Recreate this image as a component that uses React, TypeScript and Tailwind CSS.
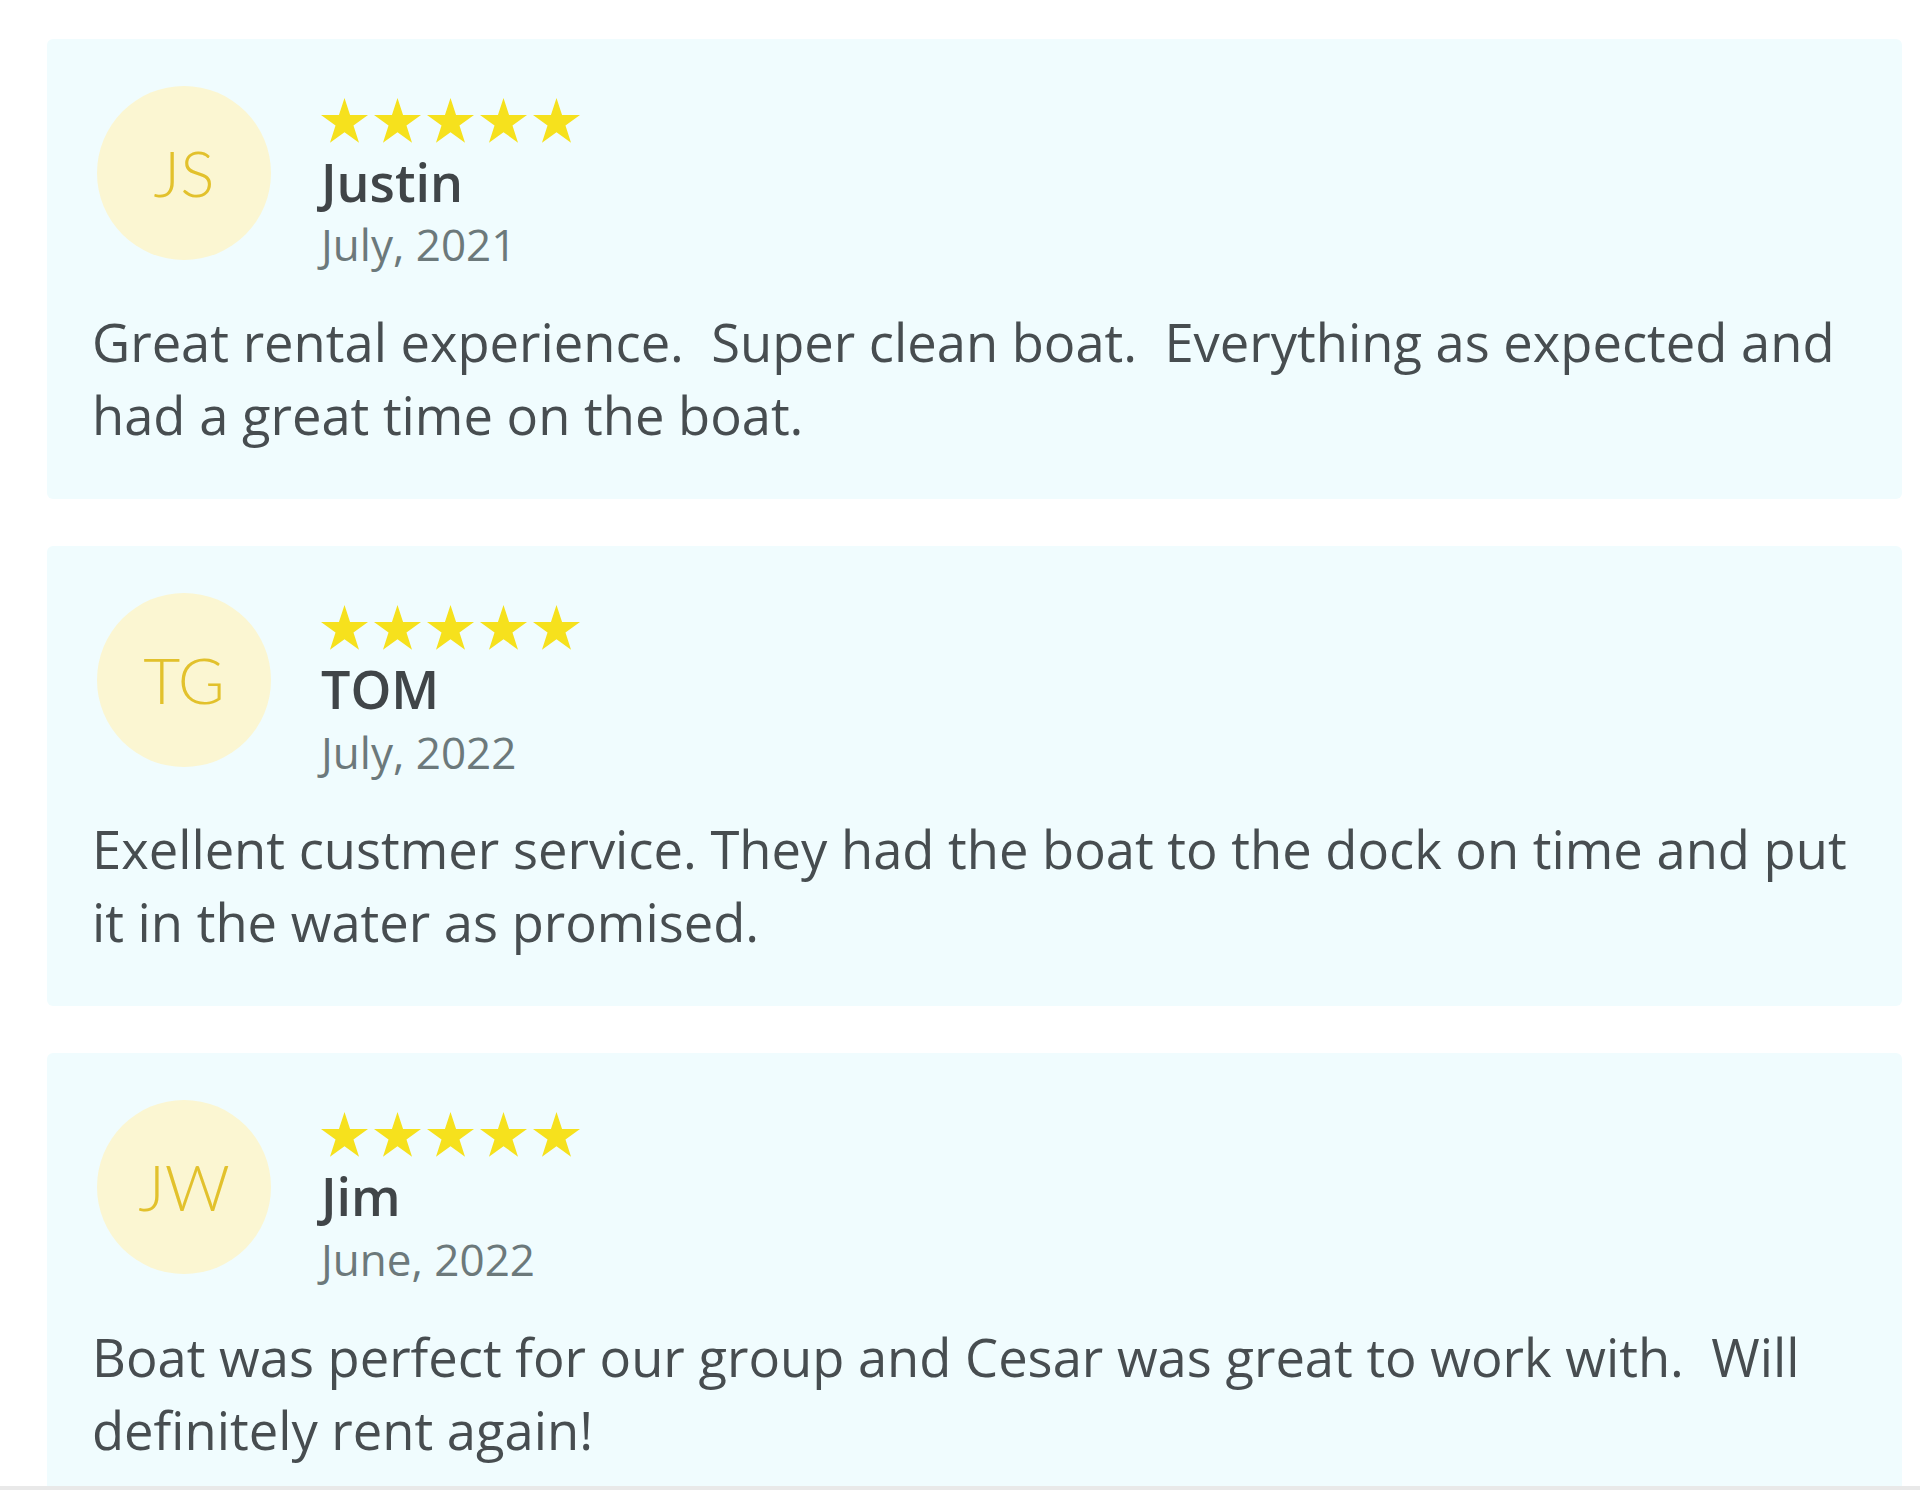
const REVIEWS = [
  {
    initials: "JS",
    name: "Justin",
    date: "July, 2021",
    text: "Great rental experience.  Super clean boat.  Everything as expected and had a great time on the boat.",
  },
  {
    initials: "TG",
    name: "TOM",
    date: "July, 2022",
    text: "Exellent custmer service. They had the boat to the dock on time and put it in the water as promised.",
  },
  {
    initials: "JW",
    name: "Jim",
    date: "June, 2022",
    text: "Boat was perfect for our group and Cesar was great to work with.  Will definitely rent again!",
  },
];

const Star = () => (
  <svg viewBox="0 0 47 45" className="w-[47px] h-[45px]" fill="#f6e11d">
    <path d="M23.5 0L29.05 17.06 47 17.07 32.48 27.62 38.02 44.68 23.5 34.14 8.98 44.68 14.52 27.62 0 17.07 17.95 17.06z" />
  </svg>
);

const ReviewCard = ({ review }: { review: (typeof REVIEWS)[number] }) => (
  <div className="shrink-0 rounded-[6px] bg-[#f0fcfe] pl-[45px] pr-[50px] pt-[47px] pb-[48px]">
    <div className="ml-[5px] flex items-start gap-[50px]">
      <div className="w-[174px] h-[174px] shrink-0 rounded-full bg-[#fbf6d2] flex items-center justify-center font-['Lato',sans-serif] text-[64px] font-light text-[#e2c12c]">
        {review.initials}
      </div>
      <div className="flex flex-col pt-[12px]">
        <div className="flex gap-[6px]">
          {[0, 1, 2, 3, 4].map((i) => (
            <Star key={i} />
          ))}
        </div>
        <span className="mt-[8px] text-[52px] leading-[1.2] font-semibold text-[#404548]">
          {review.name}
        </span>
        <span className="mt-[5px] text-[44px] leading-[1.2] text-[#6c797b]">{review.date}</span>
      </div>
    </div>
    <p className="mt-[34px] text-[52.5px] leading-[73px] text-[#474d50] whitespace-pre-wrap">
      {review.text}
    </p>
  </div>
);

export default function App() {
  return (
    <div className="h-[1490px] overflow-hidden bg-white flex flex-col font-['Open_Sans',sans-serif]">
      <div className="flex-1 min-h-0 overflow-hidden pl-[47px] pr-[18px] pt-[39px] flex flex-col gap-[47px]">
        {REVIEWS.map((review) => (
          <ReviewCard key={review.name} review={review} />
        ))}
      </div>
      <div className="h-[4px] bg-[#e9e9e9]" />
    </div>
  );
}
